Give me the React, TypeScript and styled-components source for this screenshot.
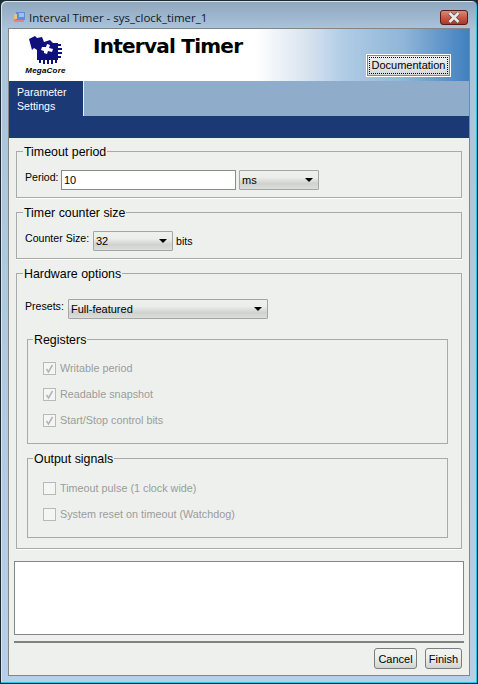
import styled, { createGlobalStyle } from "styled-components";

const GlobalStyle = createGlobalStyle`
  html, body {
    margin: 0;
    padding: 0;
    background: #1c2b33;
  }
`;

const LogoMark = () => (
  <svg width="34" height="30" viewBox="0 0 34 30">
    <g fill="#10107c">
      <path d="M0 4 L6 1 L8 3 L13 2 L15 7 L21 5 L24 8 L29 8 L29 25 L8 25 L8 15 L5 13 L3 15 Z" />
      <rect x="28" y="9" width="4" height="2" />
      <rect x="29" y="13" width="4" height="2" />
      <rect x="29" y="17" width="4" height="2" />
      <rect x="28" y="21" width="4" height="2" />
      <rect x="10" y="24" width="2" height="4" />
      <rect x="14" y="24" width="2" height="5" />
      <rect x="18" y="24" width="2" height="5" />
      <rect x="22" y="24" width="2" height="5" />
      <rect x="26" y="24" width="2" height="4" />
    </g>
    <path fill="#fff" d="M13 12 L17 12 L18 9 L21 10 L20 13 L24 14 L23 17 L19 16 L18 19 L15 18 L15 16 L12 15 Z" />
  </svg>
);

const CloseGlyph = () => (
  <svg width="14" height="11" viewBox="0 0 14 11">
    <path d="M2.5 1 L11.5 10 M11.5 1 L2.5 10" stroke="#5e4a46" strokeWidth="4" fill="none" />
    <path d="M2.5 1 L11.5 10 M11.5 1 L2.5 10" stroke="#ece8e4" strokeWidth="2.6" fill="none" />
  </svg>
);

const AppGlyph = () => (
  <svg width="16" height="16" viewBox="0 0 16 16">
    <rect x="2" y="10" width="10" height="3" fill="#e8808a" />
    <rect x="4" y="3" width="9" height="8" fill="#5c8fd6" />
    <rect x="2" y="5" width="3" height="5" fill="#e8c27a" />
    <rect x="7" y="4" width="5" height="4" fill="#9dbfe8" />
  </svg>
);

const Arrow = () => (
  <svg width="8" height="4" viewBox="0 0 8 4">
    <path d="M0 0 H8 L4 4 Z" fill="#000" />
  </svg>
);

const Window = styled.div`
  width: 478px;
  height: 684px;
  box-sizing: border-box;
  display: flex;
  flex-direction: column;
  border: 1px solid #1c2b33;
  border-radius: 6px 6px 0 0;
  background: linear-gradient(#8ea6be 0, #aac4dc 28px, #b4d0ea 100%);
  box-shadow: inset -1px -1px 0 #2cc4e6, inset 1px 1px 0 #d6e4f0;
  overflow: hidden;
`;

const TitleBar = styled.div`
  height: 27px;
  box-sizing: border-box;
  display: flex;
  align-items: center;
  padding: 5px 9px 0 11px;
  gap: 1px;
`;

const TitleText = styled.div`
  flex: 1;
  font: 11.5px "Open Sans", sans-serif;
  color: #10181f;
`;

const CloseButton = styled.div`
  width: 28px;
  height: 15px;
  box-sizing: border-box;
  display: flex;
  align-items: center;
  justify-content: center;
  border: 1px solid #5a1a1a;
  border-radius: 3px;
  background: linear-gradient(#d88a78, #c85a46 50%, #a8382a);
`;

const Client = styled.div`
  width: 460px;
  height: 646px;
  margin-left: 7px;
  border: 1px solid #858585;
  background: #eef0ee;
  display: flex;
  flex-direction: column;
`;

const Banner = styled.div`
  height: 52px;
  display: flex;
  background: linear-gradient(
    90deg,
    #fff 0,
    #fff 246px,
    #dbe5f0 295px,
    #b0cce5 335px,
    #8fb5d8 395px,
    #4080c0 100%
  );
`;

const Logo = styled.div`
  width: 84px;
  box-sizing: border-box;
  display: flex;
  flex-direction: column;
  align-items: center;
  padding: 6px 11px 0 0;
`;

const LogoText = styled.div`
  font: italic bold 8px/9px "Liberation Sans", sans-serif;
  letter-spacing: 0.2px;
  color: #000;
  margin-top: 1px;
`;

const BannerTitle = styled.div`
  flex: 1;
  font: bold 20px/24px "DejaVu Sans", sans-serif;
  letter-spacing: -0.75px;
  color: #000;
  padding-top: 5px;
`;

const DocButton = styled.div`
  width: 85px;
  height: 23px;
  margin: 25px 18px 0 0;
  box-sizing: border-box;
  border: 1px solid #fff;
  box-shadow: inset 0 0 0 1px #2aa5dc;
  background: linear-gradient(#eef1f2, #d3d8da);
  padding: 2px;
  display: flex;
`;

const DocFocus = styled.div`
  flex: 1;
  border: 1px dotted #000;
  padding-bottom: 2px;
  font: 11px "Liberation Sans", sans-serif;
  color: #000;
  display: flex;
  align-items: center;
  justify-content: center;
`;

const TabStrip = styled.div`
  height: 35px;
  background: #8fadcb;
`;

const ActiveTab = styled.div`
  width: 66px;
  height: 31px;
  padding: 4px 0 0 8px;
  background: #1b3a75;
  border-right: 1px solid #e8eef4;
  font: 10.6px/14px "Liberation Sans", sans-serif;
  color: #fff;
`;

const TabFooter = styled.div`
  height: 22px;
  background: #1b3a75;
`;

const Body = styled.div`
  flex: 1;
  display: flex;
  flex-direction: column;
  padding: 0 5px;
`;

const Legend = styled.legend`
  padding: 2px 1px 0;
  margin-left: -2px;
  font: 12.4px/15px "Liberation Sans", sans-serif;
  color: #000;
`;

const Group = styled.fieldset<{ $height: number }>`
  height: ${(p) => p.$height}px;
  box-sizing: border-box;
  margin: 5px 2px 1px;
  padding: 0 8px;
  border: 1px solid #a8aaa8;
  box-shadow: 0 1px 0 #fff;
  min-width: 0;
`;

const SubGroup = styled(Group)<{ $top: number }>`
  margin: 0 0 6px;
  padding: ${(p) => p.$top}px 7px 0 15px;
  box-shadow: none;
  &:last-child {
    margin-bottom: 0;
  }
  ${Legend} {
    margin-left: -10px;
  }
`;

const SubGroups = styled.div`
  margin: 12px 5px 0 2px;
`;

const Row = styled.div<{ $top: number }>`
  display: flex;
  align-items: center;
  gap: 3px;
  height: 20px;
  margin-top: ${(p) => p.$top}px;
`;

const FieldLabel = styled.span<{ $width: number; $raised?: boolean }>`
  width: ${(p) => p.$width}px;
  font: 10.6px "Liberation Sans", sans-serif;
  white-space: nowrap;
  color: #000;
  margin-bottom: ${(p) => (p.$raised ? 6 : 0)}px;
`;

const TextField = styled.div`
  width: 175px;
  height: 20px;
  box-sizing: border-box;
  border: 1px solid #8a8c8a;
  background: #fff;
  font: 11px/19px "Liberation Sans", sans-serif;
  padding-left: 2px;
`;

const Combo = styled.div<{ $width: number }>`
  width: ${(p) => p.$width}px;
  height: 20px;
  box-sizing: border-box;
  border: 1px solid #a4a6a4;
  border-radius: 1px;
  background: linear-gradient(#eef0ee, #eceeec 35%, #d0d2d0 70%, #dcdedc);
  font: 11px "Liberation Sans", sans-serif;
  color: #000;
  display: flex;
  align-items: center;
  justify-content: space-between;
  padding: 0 5px 0 2px;
`;

const CheckRow = styled.div`
  display: flex;
  align-items: center;
  gap: 4px;
  height: 13px;
  margin-bottom: 13px;
`;

const CheckBox = styled.div`
  width: 11px;
  height: 11px;
  border: 1px solid #b8bab8;
  background: #f4f5f4;
  display: flex;
`;

const CheckLabel = styled.span`
  font: 10.8px "Liberation Sans", sans-serif;
  color: #9a9c9a;
  margin-bottom: 2px;
`;

const MessageBox = styled.div`
  height: 74px;
  box-sizing: border-box;
  border: 1px solid #858585;
  background: #fff;
  margin-top: 11px;
`;

const Divider = styled.div`
  height: 2px;
  background: #808280;
  margin-top: 6px;
`;

const Actions = styled.div`
  display: flex;
  justify-content: flex-end;
  gap: 8px;
  margin: 5px 2px 0 0;
`;

const ActionButton = styled.div<{ $width: number }>`
  width: ${(p) => p.$width}px;
  height: 21px;
  box-sizing: border-box;
  border: 1px solid #7c7e7c;
  border-radius: 3px;
  background: linear-gradient(#f2f3f2, #eceeec 45%, #d2d4d2);
  font: 11px "Liberation Sans", sans-serif;
  color: #000;
  display: flex;
  align-items: center;
  justify-content: center;
`;

const Check = ({ label, checked }: { label: string; checked?: boolean }) => (
  <CheckRow>
    <CheckBox>
      {checked && (
        <svg width="11" height="11" viewBox="0 0 11 11">
          <path d="M2.5 6 L4.5 9 L8.5 2" stroke="#b4b6b4" strokeWidth="1.6" fill="none" />
        </svg>
      )}
    </CheckBox>
    <CheckLabel>{label}</CheckLabel>
  </CheckRow>
);

export default function App() {
  return (
    <>
      <GlobalStyle />
      <Window>
        <TitleBar>
          <AppGlyph />
          <TitleText>Interval Timer - sys_clock_timer_1</TitleText>
          <CloseButton>
            <CloseGlyph />
          </CloseButton>
        </TitleBar>
        <Client>
          <Banner>
            <Logo>
              <LogoMark />
              <LogoText>MegaCore</LogoText>
            </Logo>
            <BannerTitle>Interval Timer</BannerTitle>
            <DocButton>
              <DocFocus>Documentation</DocFocus>
            </DocButton>
          </Banner>
          <TabStrip>
            <ActiveTab>
              Parameter
              <br />
              Settings
            </ActiveTab>
          </TabStrip>
          <TabFooter />
          <Body>
            <Group $height={55}>
              <Legend>Timeout period</Legend>
              <Row $top={10}>
                <FieldLabel $width={33} $raised>
                  Period:
                </FieldLabel>
                <TextField>10</TextField>
                <Combo $width={80}>
                  ms
                  <Arrow />
                </Combo>
              </Row>
            </Group>
            <Group $height={55}>
              <Legend>Timer counter size</Legend>
              <Row $top={10}>
                <FieldLabel $width={65} $raised>
                  Counter Size:
                </FieldLabel>
                <Combo $width={80}>
                  32
                  <Arrow />
                </Combo>
                <FieldLabel $width={20}>bits</FieldLabel>
              </Row>
            </Group>
            <Group $height={284}>
              <Legend>Hardware options</Legend>
              <Row $top={17}>
                <FieldLabel $width={40} $raised>
                  Presets:
                </FieldLabel>
                <Combo $width={200}>
                  Full-featured
                  <Arrow />
                </Combo>
              </Row>
              <SubGroups>
                <SubGroup $height={113} $top={14}>
                  <Legend>Registers</Legend>
                  <Check checked label="Writable period" />
                  <Check checked label="Readable snapshot" />
                  <Check checked label="Start/Stop control bits" />
                </SubGroup>
                <SubGroup $height={88} $top={15}>
                  <Legend>Output signals</Legend>
                  <Check label="Timeout pulse (1 clock wide)" />
                  <Check label="System reset on timeout (Watchdog)" />
                </SubGroup>
              </SubGroups>
            </Group>
            <MessageBox />
            <Divider />
            <Actions>
              <ActionButton $width={43}>Cancel</ActionButton>
              <ActionButton $width={37}>Finish</ActionButton>
            </Actions>
          </Body>
        </Client>
      </Window>
    </>
  );
}
